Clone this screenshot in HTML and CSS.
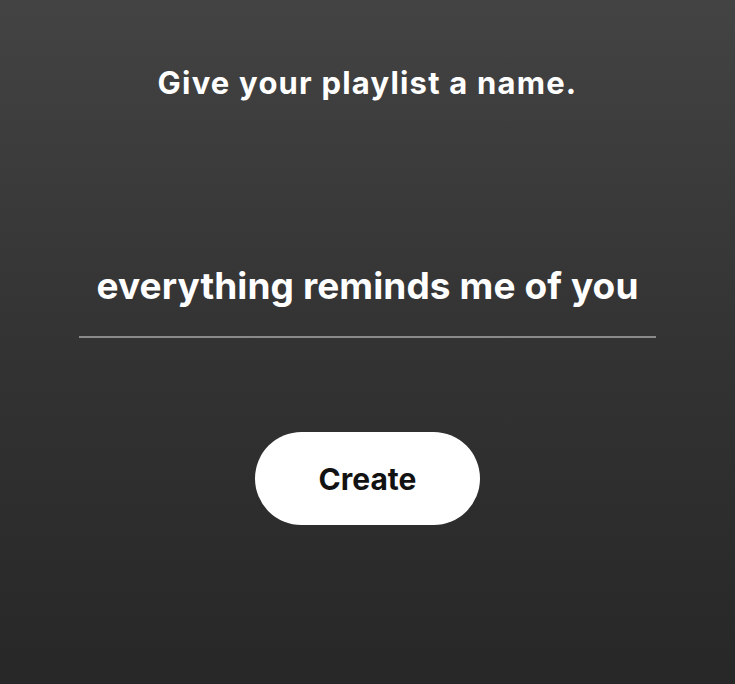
FILE: index.html
```html
<!DOCTYPE html>
<html>
<head>
<meta charset="utf-8">
<link rel="stylesheet" href="styles.css">
</head>
<body>
<main class="dialog">
  <h1 class="title">Give your playlist a name.</h1>
  <div class="field">
    <div class="name">everything reminds me of you</div>
  </div>
  <button class="create">Create</button>
</main>
</body>
</html>
```
FILE: styles.css
```css
html, body {
  margin: 0;
  padding: 0;
}
body {
  width: 735px;
  height: 684px;
  background: linear-gradient(to bottom, #434343 0%, #333333 50%, #272727 100%);
  font-family: "Inter", "Liberation Sans", sans-serif;
  color: #fff;
  overflow: hidden;
}
.dialog {
  display: flex;
  flex-direction: column;
  align-items: center;
  padding-top: 65px;
}
.title {
  margin: 0;
  font-size: 31px;
  line-height: 36px;
  font-weight: 700;
  letter-spacing: 1.2px;
}
.field {
  margin-top: 163px;
  width: 577px;
  border-bottom: 2px solid #8a8a8a;
  display: flex;
  justify-content: center;
  padding-bottom: 28px;
}
.name {
  font-size: 37px;
  line-height: 44px;
  font-weight: 700;
  letter-spacing: 0.1px;
}
.create {
  margin-top: 94px;
  width: 225px;
  height: 93px;
  border: none;
  border-radius: 47px;
  background: #fff;
  color: #121212;
  font-family: "Inter", "Liberation Sans", sans-serif;
  font-size: 30px;
  font-weight: 700;
  padding: 0;
}
```
